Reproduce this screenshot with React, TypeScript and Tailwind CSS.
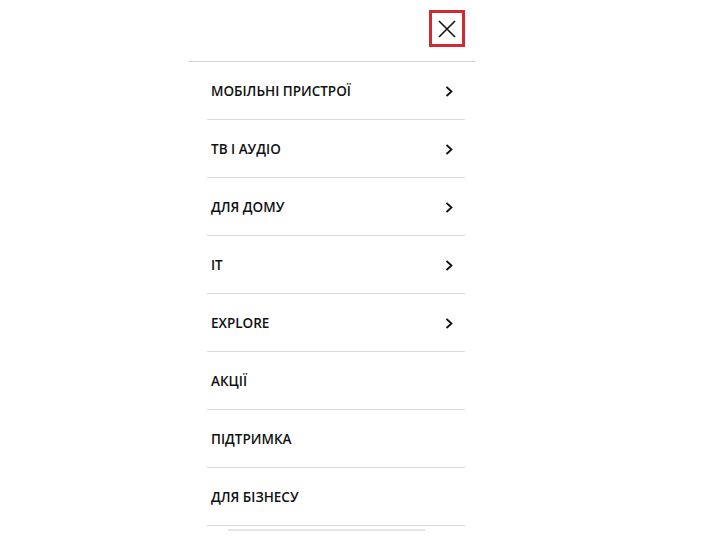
import { useState } from "react";

const items = [
  { label: "МОБІЛЬНІ ПРИСТРОЇ", sub: true },
  { label: "ТВ І АУДІО", sub: true },
  { label: "ДЛЯ ДОМУ", sub: true },
  { label: "IT", sub: true },
  { label: "EXPLORE", sub: true },
  { label: "АКЦІЇ", sub: false },
  { label: "ПІДТРИМКА", sub: false },
  { label: "ДЛЯ БІЗНЕСУ", sub: false },
];

export default function App() {
  const [open, setOpen] = useState<string | null>(null);

  return (
    <div className="w-[720px] h-[552px] bg-white overflow-hidden font-['Open_Sans',sans-serif] text-black">
      <div className="ml-[188px] w-[288px]">
        {/* Header */}
        <div className="h-[62px] border-b border-[#d4d4d4] flex justify-end pr-[11px] pt-[10px]">
          <button
            className="w-[36px] h-[37px] border-[3px] border-[#cf2a36] flex items-center justify-center"
            title="Close"
          >
            <svg width="20" height="20" viewBox="0 0 20 20" fill="none" stroke="#111" strokeWidth="1.6">
              <path d="M2 2L18 18M18 2L2 18" />
            </svg>
          </button>
        </div>

        {/* Menu */}
        <ul className="pl-[19px] pr-[11px]">
          {items.map(item => (
            <li
              key={item.label}
              onClick={() => setOpen(item.label)}
              className="h-[58px] border-b border-[#dadada] flex items-center justify-between pl-[4px] pr-[12px] cursor-pointer"
            >
              <span className={`pt-[2px] text-[13.5px] font-semibold text-[#111] ${open === item.label ? "underline" : ""}`}>
                {item.label}
              </span>
              {item.sub && (
                <svg width="8" height="11" viewBox="0 0 8 11" fill="none" stroke="#111" strokeWidth="1.8" className="mt-[1px]">
                  <path d="M1.5 1L6.5 5.5L1.5 10" />
                </svg>
              )}
            </li>
          ))}
        </ul>
        <div className="ml-[40px] mt-[3px] w-[197px] h-[2px] bg-[#e6e6e6]" />
      </div>
    </div>
  );
}
